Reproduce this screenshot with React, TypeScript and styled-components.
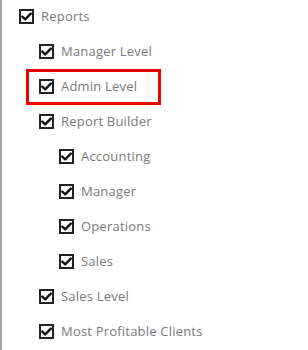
import styled, { createGlobalStyle, css } from "styled-components";

const GlobalStyle = createGlobalStyle`
  html, body {
    margin: 0;
    padding: 0;
    background: #ffffff;
  }
`;

type Item = { label: string; level: number; highlight?: boolean };

const items: Item[] = [
  { label: "Reports", level: 0 },
  { label: "Manager Level", level: 1 },
  { label: "Admin Level", level: 1, highlight: true },
  { label: "Report Builder", level: 1 },
  { label: "Accounting", level: 2 },
  { label: "Manager", level: 2 },
  { label: "Operations", level: 2 },
  { label: "Sales", level: 2 },
  { label: "Sales Level", level: 1 },
  { label: "Most Profitable Clients", level: 1 },
];

const CheckIcon = () => (
  <svg width="11" height="9" viewBox="0 0 11 9">
    <path d="M1.3 4.6 L4.2 7.3 L9.8 1.6" fill="none" stroke="#111" strokeWidth="2.4" strokeLinecap="round" strokeLinejoin="round" />
  </svg>
);

const App = () => {
  return (
    <Panel>
      <GlobalStyle />
      <Tree>
        {items.map((it) => (
          <Row key={it.label} level={it.level} highlight={!!it.highlight}>
            <Box>
              <CheckIcon />
            </Box>
            <Label>{it.label}</Label>
          </Row>
        ))}
      </Tree>
    </Panel>
  );
};

const Panel = styled.div`
  width: 308px;
  height: 350px;
  box-sizing: border-box;
  border-left: 2px solid #a3a3a3;
  background: #ffffff;
  overflow: hidden;
`;

const Tree = styled.ul`
  list-style: none;
  margin: -1.5px 0 0 0;
  padding: 0 0 0 17px;
  display: flex;
  flex-direction: column;
`;

const Row = styled.li<{ level: number; highlight: boolean }>`
  position: relative;
  display: flex;
  align-items: center;
  gap: 7px;
  height: 35px;
  width: fit-content;
  margin-left: ${(p) => p.level * 20}px;
  ${(p) =>
    p.highlight &&
    css`
      &::before {
        content: "";
        position: absolute;
        left: -13px;
        right: -24px;
        top: 0px;
        bottom: -1px;
        border: 3px solid #ee0000;
      }
    `}
`;

const Box = styled.span`
  width: 15px;
  height: 15px;
  box-sizing: border-box;
  border: 2px solid #222222;
  display: flex;
  align-items: center;
  justify-content: center;
  flex-shrink: 0;
`;

const Label = styled.span`
  font-family: "Open Sans", "Liberation Sans", sans-serif;
  font-size: 13px;
  color: #7a7a7a;
  letter-spacing: 0.2px;
`;

export default App;
